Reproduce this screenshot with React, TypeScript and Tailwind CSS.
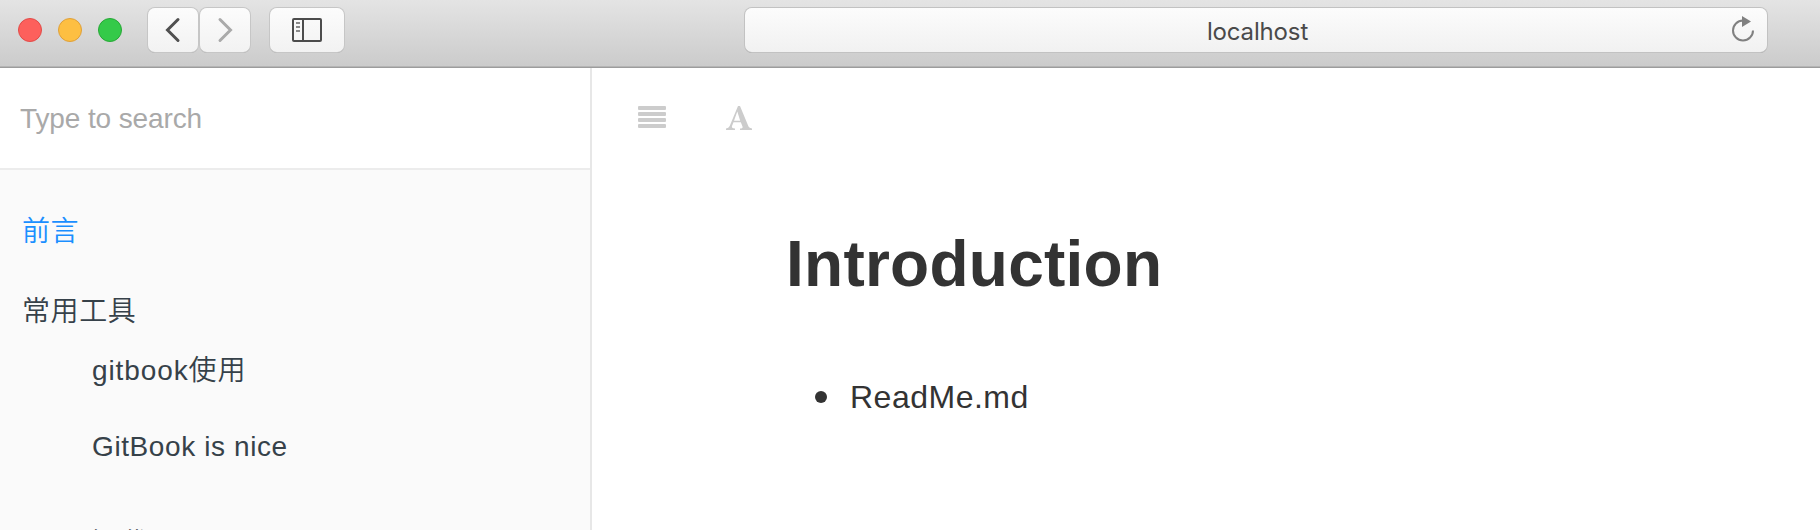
import React from "react";

const rowText = "block whitespace-nowrap text-[28px] leading-[32px] font-[350]";

function TitleBar() {
  return (
    <header className="flex h-[68px] shrink-0 items-start border-b border-[#9c9c9c] bg-linear-to-b from-[#e4e4e4] to-[#cbcbcb] pt-[8px] pl-[18px] shadow-[inset_0_-1px_0_#b4b4b4]">
      <div className="mt-[10px] flex gap-4">
        <span className="size-6 rounded-full border border-[#e24b48] bg-[#fd605c]" />
        <span className="size-6 rounded-full border border-[#dfa03a] bg-[#fdbf42]" />
        <span className="size-6 rounded-full border border-[#27a836] bg-[#34ca49]" />
      </div>
      <div className="ml-[26px] flex gap-[2px]">
        <ToolButton className="w-[50px]">
          <svg width="50" height="44" viewBox="0 0 50 44" fill="none" stroke="#505050" strokeWidth="3" strokeLinecap="round">
            <path d="M30 11.500 19.500 22l10.500 10.500" />
          </svg>
        </ToolButton>
        <ToolButton className="w-[50px]">
          <svg width="50" height="44" viewBox="0 0 50 44" fill="none" stroke="#aaaaaa" strokeWidth="3" strokeLinecap="round">
            <path d="M20 11.500 30.500 22 20 32.500" />
          </svg>
        </ToolButton>
      </div>
      <ToolButton className="ml-5 w-[74px]">
        <svg width="74" height="44" viewBox="0 0 74 44" fill="none" stroke="#4c4c4c" strokeWidth="2">
          <rect x="23" y="11" width="28" height="22" rx="1" />
          <path d="M33 11v22" />
          <path d="M26 15h4M26 19h4M26 23h4" stroke="#8a8a8a" />
        </svg>
      </ToolButton>
      <div className="ml-[401px] flex h-11 w-[1022px] items-center rounded-[7px] bg-linear-to-b from-[#fcfcfc] to-[#f1f1f1] shadow-[0_0_0_1px_#c2c2c2,0_1px_0_0_#959595]">
        <span className="flex-1 pt-[3px] pl-[42px] text-center font-['Inter',sans-serif] text-[24px] leading-[44px] tracking-[-0.15px] text-[#4a4a4a]">localhost</span>
        <svg width="39" height="44" viewBox="0 0 39 44" fill="none">
          <path d="M25 22.500A10 10 0 1 1 15 12.500" stroke="#808080" strokeWidth="2" />
          <path d="M14 8 23 13.500l-9 5.500Z" fill="#808080" />
        </svg>
      </div>
    </header>
  );
}

function ToolButton({ className, children }: { className: string; children: React.ReactNode }) {
  return (
    <button
      className={`${className} h-11 rounded-[7px] bg-linear-to-b from-[#fcfcfc] to-[#f2f2f2] shadow-[0_0_0_1px_#c6c6c6,0_1px_0_0_#a0a0a0]`}
    >
      {children}
    </button>
  );
}

function Sidebar() {
  return (
    <aside className="flex w-[592px] shrink-0 flex-col border-r-2 border-[#e7e7e7] bg-[#fafafa] text-[#364149]">
      <div className="flex h-[102px] shrink-0 items-center border-b-2 border-[#ececec] bg-white pt-[2px] pl-5">
        <input
          placeholder="Type to search"
          className="w-[500px] text-[28px] leading-8 tracking-[-0.12px] outline-none placeholder:text-[#a9a9a9]"
        />
      </div>
      <nav className="pt-[46px]">
        <a className={`${rowText} pl-[22px] tracking-[0.5px] text-[#1a8fff]`}>前言</a>
        <a className={`${rowText} mt-[48px] pl-[22px] tracking-[0.6px]`}>常用工具</a>
        <a className={`${rowText} mt-[27px] pl-[92px] tracking-[0.9px]`}>gitbook使用</a>
        <a className={`${rowText} mt-[44px] pl-[92px] tracking-[0.6px]`}>GitBook is nice</a>
        <a className={`${rowText} mt-[65px] pl-[92px] tracking-[0.6px]`}>源代码</a>
      </nav>
    </aside>
  );
}

function Content() {
  return (
    <main className="flex-1 bg-white pt-[38px] text-[#333333]">
      <div className="flex h-[22px] items-start pl-[46px] text-[#cccccc]">
        <svg width="28" height="22" viewBox="0 0 28 22" fill="currentColor">
          <rect width="28" height="4" rx="1" />
          <rect y="6" width="28" height="4" rx="1" />
          <rect y="12" width="28" height="4" rx="1" />
          <rect y="18" width="28" height="4" rx="1" />
        </svg>
        <svg className="ml-[60px]" width="26" height="24" viewBox="0 0 26 24" fill="currentColor">
          <path d="M12 0h2l8.500 20.500q.7 1.700 3.500 2V24H14v-1.500q3.200 0 2.500-2l-1.700-4.300H7.500L6 20q-.9 2.300 3 2.500V24H0v-1.500q2.700-.3 3.700-2.500ZM11.300 5.500 8 14.700h6.200Z" />
        </svg>
      </div>
      <div className="pl-[194px]">
        <h1 className="mt-[99px] text-[64px] leading-[74px] font-bold tracking-[0.25px]">Introduction</h1>
        <ul className="mt-[77px]">
          <li className="flex items-center pl-[29px] text-[32px] leading-[38px] tracking-[0.5px]">
            <span className="size-3 rounded-full bg-[#333333]" />
            <span className="ml-[23px]">ReadMe.md</span>
          </li>
        </ul>
      </div>
    </main>
  );
}

export default function App() {
  return (
    <div className="flex h-[530px] w-[1820px] flex-col overflow-hidden font-['Liberation_Sans','Noto_Sans_CJK_SC',sans-serif]">
      <TitleBar />
      <div className="flex min-h-0 flex-1">
        <Sidebar />
        <Content />
      </div>
    </div>
  );
}
